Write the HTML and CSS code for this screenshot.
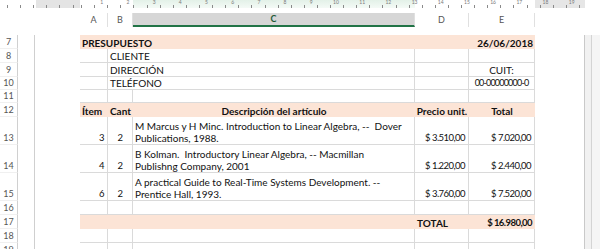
FILE: index.html
```html
<!DOCTYPE html>
<html lang="es">
<head>
    <meta charset="UTF-8" />
    <title>Presupuesto</title>
    <link rel="stylesheet" href="styles.css">
</head>
<body>
    <div class="ruler">
        <div class="seg seg-out-l"></div>
        <div class="seg seg-page" style="width:53px"></div>
        <div class="seg seg-sel"></div>
        <div class="seg seg-page" style="width:120px"></div>
        <div class="seg seg-out-r"></div>
        <div class="seg seg-rest"></div>
        <div class="ruler-nums">
            <span>1</span><span>2</span><span>3</span><span>4</span><span>5</span><span>6</span><span>7</span><span>8</span><span>9</span><span>10</span><span>11</span><span>12</span><span>13</span><span>14</span><span>15</span><span>16</span><span>17</span><span>18</span><span>19</span>
        </div>
    </div>

    <div class="colheads">
        <div class="corner"></div>
        <div class="ch">A</div>
        <div class="ch">B</div>
        <div class="ch ch-sel">C</div>
        <div class="ch">D</div>
        <div class="ch">E</div>
    </div>

    <div class="sheet">
        <!-- 7 -->
        <div class="row">
            <div class="rn">7</div><div class="gut"></div><div class="mg"></div>
            <div class="c fill bold span4">PRESUPUESTO</div>
            <div class="c fill bold right">26/06/2018</div>
            <div class="pm"></div><div class="edge"></div><div class="next"></div>
        </div>
        <!-- 8 -->
        <div class="row">
            <div class="rn">8</div><div class="gut"></div><div class="mg"></div>
            <div class="c g"></div>
            <div class="c g span2">CLIENTE</div>
            <div class="c g"></div>
            <div class="c g"></div>
            <div class="pm"></div><div class="edge"></div><div class="next"></div>
        </div>
        <!-- 9 -->
        <div class="row">
            <div class="rn">9</div><div class="gut"></div><div class="mg"></div>
            <div class="c g"></div>
            <div class="c g span2">DIRECCIÓN</div>
            <div class="c g"></div>
            <div class="c g center">CUIT:</div>
            <div class="pm"></div><div class="edge"></div><div class="next"></div>
        </div>
        <!-- 10 -->
        <div class="row short">
            <div class="rn">10</div><div class="gut"></div><div class="mg"></div>
            <div class="c g"></div>
            <div class="c g span2">TELÉFONO</div>
            <div class="c g"></div>
            <div class="c g center num cuit">00-00000000-0</div>
            <div class="pm"></div><div class="edge"></div><div class="next"></div>
        </div>
        <!-- 11 -->
        <div class="row short">
            <div class="rn">11</div><div class="gut"></div><div class="mg"></div>
            <div class="c g"></div><div class="c g"></div><div class="c g"></div><div class="c g"></div><div class="c g"></div>
            <div class="pm"></div><div class="edge"></div><div class="next"></div>
        </div>
        <!-- 12 -->
        <div class="row">
            <div class="rn">12</div><div class="gut"></div><div class="mg"></div>
            <div class="c fill bold">Ítem</div>
            <div class="c fill bold">Cant</div>
            <div class="c fill bold center">Descripción del artículo</div>
            <div class="c fill bold center">Precio unit.</div>
            <div class="c fill bold center">Total</div>
            <div class="pm"></div><div class="edge"></div><div class="next"></div>
        </div>
        <!-- 13 -->
        <div class="row tall">
            <div class="rn">13</div><div class="gut"></div><div class="mg"></div>
            <div class="c g right num">3</div>
            <div class="c g center num">2</div>
            <div class="c g wrap">M Marcus y H Minc. Introduction to Linear Algebra, --&nbsp; Dover<br>Publications, 1988.</div>
            <div class="c g right num">$ 3.510,00</div>
            <div class="c g right num">$ 7.020,00</div>
            <div class="pm"></div><div class="edge"></div><div class="next"></div>
        </div>
        <!-- 14 -->
        <div class="row tall">
            <div class="rn">14</div><div class="gut"></div><div class="mg"></div>
            <div class="c g right num">4</div>
            <div class="c g center num">2</div>
            <div class="c g wrap">B Kolman.&nbsp; Introductory Linear Algebra, -- Macmillan<br>Publishng Company, 2001</div>
            <div class="c g right num">$ 1.220,00</div>
            <div class="c g right num">$ 2.440,00</div>
            <div class="pm"></div><div class="edge"></div><div class="next"></div>
        </div>
        <!-- 15 -->
        <div class="row tall">
            <div class="rn">15</div><div class="gut"></div><div class="mg"></div>
            <div class="c g right num">6</div>
            <div class="c g center num">2</div>
            <div class="c g wrap">A practical Guide to Real-Time Systems Development. --<br>Prentice Hall, 1993.</div>
            <div class="c g right num">$ 3.760,00</div>
            <div class="c g right num">$ 7.520,00</div>
            <div class="pm"></div><div class="edge"></div><div class="next"></div>
        </div>
        <!-- 16 -->
        <div class="row">
            <div class="rn">16</div><div class="gut"></div><div class="mg"></div>
            <div class="c g"></div><div class="c g"></div><div class="c g"></div><div class="c g"></div><div class="c g"></div>
            <div class="pm"></div><div class="edge"></div><div class="next"></div>
        </div>
        <!-- 17 -->
        <div class="row">
            <div class="rn">17</div><div class="gut"></div><div class="mg"></div>
            <div class="c fill span3"></div>
            <div class="c fill bold">TOTAL</div>
            <div class="c fill bold right num">$ 16.980,00</div>
            <div class="pm"></div><div class="edge"></div><div class="next"></div>
        </div>
        <!-- 18 -->
        <div class="row">
            <div class="rn">18</div><div class="gut"></div><div class="mg"></div>
            <div class="c g"></div><div class="c g"></div><div class="c g"></div><div class="c g"></div><div class="c g"></div>
            <div class="pm"></div><div class="edge"></div><div class="next"></div>
        </div>
        <!-- 19 -->
        <div class="row">
            <div class="rn">19</div><div class="gut"></div><div class="mg"></div>
            <div class="c g"></div><div class="c g"></div><div class="c g"></div><div class="c g"></div><div class="c g"></div>
            <div class="pm"></div><div class="edge"></div><div class="next"></div>
        </div>
    </div>
</body>
</html>
```

FILE: styles.css
```css
/* Grundlayout */
* {
    box-sizing: border-box;
}
html, body {
    margin: 0;
    height: 100%;
    overflow: hidden;
    background: #fff;
    font-family: Lato, "Liberation Sans", sans-serif;
    font-size: 10px;
    color: #111;
}

/* Lineal oben */
.ruler {
    position: relative;
    display: flex;
    height: 8px;
}
.seg {
    height: 8px;
}
.seg-out-l {
    width: 80px;
    background: linear-gradient(90deg, #fff 0 36px, #e4e4e4 36px);
}
.seg-page {
    background: #fff;
}
.seg-sel {
    width: 282px;
    background: linear-gradient(#e3f1e8, #f4faf6);
}
.seg-out-r {
    width: 50px;
    background: #e6e6e6;
}
.seg-rest {
    flex: 1;
    background: #fff;
}
.ruler::after {
    content: "";
    position: absolute;
    left: 0;
    right: 15px;
    bottom: 0;
    height: 3px;
    background: repeating-linear-gradient(90deg, transparent 0 1.1px, #8a8a8a 1.1px 2.1px, transparent 2.1px 13.1px);
    background-position: 80px 0;
}
.ruler-nums {
    position: absolute;
    left: 80px;
    top: 0;
    display: flex;
    font-size: 5px;
    line-height: 5px;
    color: #7a7a7a;
}
.ruler-nums span {
    width: 26.2px;
    text-align: right;
    padding-right: 3px;
}

/* Spaltenköpfe */
.colheads {
    display: grid;
    grid-template-columns: 80px 28px 25px 282px 54px 66px;
    height: 14px;
    margin-top: 5px;
    font-size: 9px;
    line-height: 13px;
    color: #555;
    text-align: center;
}
.ch {
    border-right: 1px solid #e0e0e0;
}
.ch-sel {
    background: #d6d6d6;
    border-bottom: 2px solid #217346;
    color: #1f5a37;
    font-weight: 700;
    line-height: 12px;
}

/* Tabelle */
.sheet {
    margin-top: 8px;
}
.row {
    display: grid;
    grid-template-columns: 18px 17px 45px 28px 25px 282px 54px 66px 50px 7px 1fr;
    height: 14px;
    line-height: 12px;
}
.row.short {
    height: 13px;
}
.row.tall {
    height: 28px;
}
.rn {
    border-right: 1px solid #d0d0d0;
    border-bottom: 1px solid #f0f0f0;
    font-size: 9px;
    color: #555;
    display: flex;
    align-items: flex-end;
    justify-content: center;
}
.gut {
    border-right: 1px solid #cfcfcf;
}
.c {
    display: flex;
    align-items: flex-end;
    padding: 0 2px;
    white-space: nowrap;
    overflow: visible;
}
.c.g {
    border-right: 1px solid #dadada;
    border-bottom: 1px solid #dadada;
}
.fill {
    background: #fce4d6;
}
.bold {
    font-weight: 700;
}
.num {
    font-size: 9.5px;
    letter-spacing: -0.55px;
}
.num.cuit {
    font-size: 9px;
    letter-spacing: -0.8px;
}
.right {
    justify-content: flex-end;
}
.right.num {
    padding-right: 3px;
}
.center {
    justify-content: center;
}
.wrap {
    white-space: nowrap;
    display: block;
    padding-top: 3px;
    line-height: 12px;
}
.span2 {
    grid-column: span 2;
}
.span3 {
    grid-column: span 3;
}
.span4 {
    grid-column: span 4;
}
.pm {
    border-right: 1px solid #c9c9c9;
}
.edge {
    background: #f1f1f1;
    border-right: 1px solid #d4d4d4;
}
.next {
    background: #f5f5f5;
}
```
